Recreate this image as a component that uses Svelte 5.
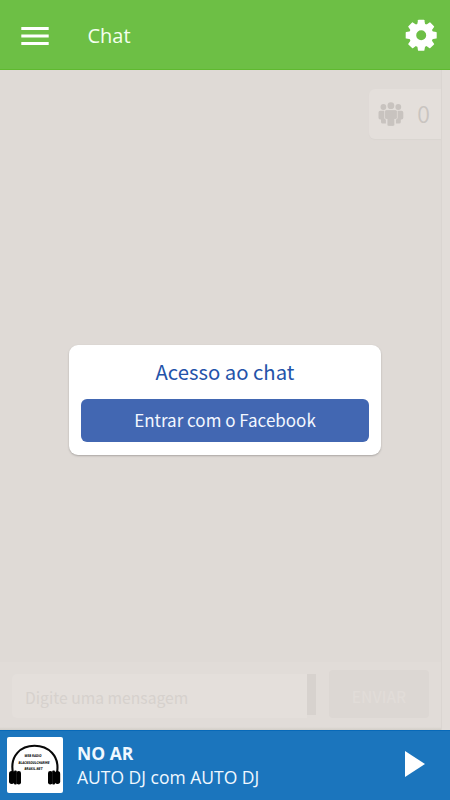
<script>
  const listeners = 0;
  const teeth = [0, 45, 90, 135, 180, 225, 270, 315];
  const logoLines = [
    { text: 'WEB RADIO', x: 26, y: 20, width: 17 },
    { text: 'BLACKSOULCHARME', x: 27, y: 27, width: 31 },
    { text: 'BRASIL.NET', x: 26.5, y: 33, width: 18 }
  ];
</script>

<div class="app">
  <header>
    <button class="menu" aria-label="Menu">
      <svg width="28" height="18" viewBox="0 0 28 18">
        <path d="M.3 0h27.400v3H.3zM.3 7.500h27.400v3H.3zM.3 15h27.400v3H.3z" fill="#fff" />
      </svg>
    </button>
    <h1>Chat</h1>
    <button class="settings" aria-label="Configurações">
      <svg width="32" height="32" viewBox="-16.200 -16.300 32 32">
        <circle r="8.500" fill="none" stroke="#fff" stroke-width="7" />
        {#each teeth as angle}
          <path d="M-4-10.500L-3.200-15q.1-.5.600-.5h5.200q.5 0 .6.500l.8 4.500z" fill="#fff" transform="rotate({angle})" />
        {/each}
      </svg>
    </button>
  </header>

  <main>
    <div class="room">
      <div class="people">
        <svg width="26" height="25" viewBox="0 0 26 25" fill="#c8c3bf">
          <circle cx="5.400" cy="5" r="2.900" />
          <circle cx="20.300" cy="5" r="2.900" />
          <path d="M2.200 8.700h4v7.500l1.700 1.600v3.800H4.600a1.600 1.600 0 0 1-1.600-1.600v-2.600H2.200A1.700 1.700 0 0 1 .5 15.700v-5.300a1.700 1.700 0 0 1 1.700-1.700z" />
          <path d="M23.600 8.700h-4v7.500l-1.700 1.600v3.800h3.300a1.600 1.600 0 0 0 1.600-1.600v-2.600h.8a1.700 1.700 0 0 0 1.700-1.700v-5.300a1.700 1.700 0 0 0-1.700-1.700z" />
          <path d="M8.400 7.900h9a1.700 1.700 0 0 1 1.700 1.700v5.800a1.700 1.700 0 0 1-1.700 1.700h-.9v5.300a1.700 1.700 0 0 1-1.700 1.700h-3.800a1.700 1.700 0 0 1-1.700-1.700v-5.300h-.9a1.700 1.700 0 0 1-1.700-1.700V9.600a1.700 1.700 0 0 1 1.700-1.700z" stroke="#e4dfdb" stroke-width=".3" />
          <circle cx="12.900" cy="3.700" r="3.400" />
        </svg>
        <span>{listeners}</span>
      </div>

      <div class="dialog">
        <h2>Acesso ao chat</h2>
        <button class="facebook"><span>Entrar com o Facebook</span></button>
      </div>

      <div class="composer">
        <div class="field"><span>Digite uma mensagem</span></div>
        <div class="scroller"></div>
        <div class="send">ENVIAR</div>
      </div>
    </div>
    <div class="gutter"></div>
  </main>

  <footer>
    <div class="cover">
      <svg width="56" height="56" viewBox="0 0 56 56">
        <rect width="56" height="56" rx="2" fill="#fff" />
        <path d="M6 36C2.500 18.500 14 8.800 27.500 8.800S53 18.500 50 36" fill="none" stroke="#080808" stroke-width="2.100" />
        <rect x="2" y="34" width="5.500" height="13" rx="2.700" />
        <rect x="7" y="33.500" width="2.800" height="14" rx="1" />
        <rect x="9.500" y="34" width="4.500" height="13.500" rx="2.200" />
        <rect x="41" y="34" width="4.500" height="13.500" rx="2.200" />
        <rect x="45.200" y="33.500" width="2.800" height="14" rx="1" />
        <rect x="47.700" y="34" width="5.500" height="13" rx="2.700" />
        {#each logoLines as line}
          <text x={line.x} y={line.y} textLength={line.width} lengthAdjust="spacingAndGlyphs">{line.text}</text>
        {/each}
      </svg>
    </div>
    <div class="track">
      <strong>NO AR</strong>
      <span>AUTO DJ com AUTO DJ</span>
    </div>
    <button class="play" aria-label="Tocar">
      <svg width="20" height="26" viewBox="0 0 20 26"><path d="M0 0l20 13L0 26z" fill="#fff" /></svg>
    </button>
  </footer>
</div>

<style>
  .app {
    display: flex;
    flex-direction: column;
    width: 450px;
    height: 800px;
    overflow: hidden;
    font-family: 'Open Sans', sans-serif;
  }
  button {
    border: 0;
    padding: 0;
    background: none;
    display: flex;
  }
  svg { display: block; }
  header {
    height: 70px;
    flex: none;
    box-sizing: border-box;
    padding: 0 13px 0 21px;
    display: flex;
    align-items: center;
    background: #6dbf45;
    border-bottom: 1px solid #5fb92f;
  }
  .menu { padding-top: 2px; }
  h1 {
    margin: 2px 0 0 38.500px;
    font-size: 20px;
    line-height: 28px;
    font-weight: 400;
    color: #f4ffef;
  }
  .settings { margin: 1px 0 0 auto; }
  main {
    height: 660px;
    flex: none;
    display: flex;
    background: #dfdad6;
    font-family: 'Noto Sans CJK SC', sans-serif;
  }
  .room {
    width: 441px;
    display: flex;
    flex-direction: column;
  }
  .gutter {
    width: 8px;
    border-left: 1px solid #dad5d1;
    background: #e2ddd9;
  }
  .people {
    align-self: flex-end;
    box-sizing: border-box;
    width: 72px;
    height: 50px;
    margin-top: 19px;
    padding: 0 11px 0 9px;
    display: flex;
    align-items: center;
    justify-content: space-between;
    border-radius: 6px 0 0 6px;
    background: #e4dfdb;
    box-shadow: 0 1px 1px #dad5d1;
    color: #c9c4c0;
    font-size: 23px;
    line-height: 30px;
  }
  .people span { padding-bottom: 3px; font-weight: 350; }
  .dialog {
    box-sizing: border-box;
    width: 312px;
    height: 110px;
    margin: 206px 0 0 69px;
    padding: 11px 12px 13px;
    border-radius: 9px;
    background: #fff;
    box-shadow: 0 1px 2px #aaa6a3;
  }
  h2 {
    margin: 0 0 12.500px;
    font-size: 20.300px;
    line-height: 30px;
    font-weight: 400;
    text-align: center;
    color: #2453a9;
  }
  .facebook {
    width: 288px;
    height: 43.500px;
    align-items: center;
    justify-content: center;
    border-radius: 6px;
    background: #4267b2;
    color: #f3f7ff;
    font: 17px/24px 'Noto Sans CJK SC', sans-serif;
  }
  .composer {
    margin-top: auto;
    height: 68px;
    box-sizing: border-box;
    padding: 8px 12px 0;
    display: flex;
    background: linear-gradient(#e1dcd8 65px, #d2cec7);
  }
  .field {
    box-sizing: border-box;
    width: 295px;
    height: 44px;
    margin-top: 4px;
    padding: 11px 0 0 13px;
    border-radius: 5px 0 0 5px;
    background: #e4dfdb;
    color: #d6d1cd;
    font-size: 15.700px;
    line-height: 25px;
  }
  .scroller {
    width: 9px;
    height: 41px;
    margin-top: 4px;
    background: #d7d2ce;
  }
  .send {
    width: 100px;
    height: 48px;
    margin-left: 13px;
    border-radius: 4px;
    background: #dcd7d3;
    color: #e1dcd8;
    font-size: 15.500px;
    font-weight: 500;
    line-height: 52px;
    text-align: center;
  }
  footer {
    height: 70px;
    flex: none;
    box-sizing: border-box;
    padding: 0 25px 1px 7px;
    display: flex;
    align-items: center;
    background: #1b75bd;
    border-top: 1px solid #0869b8;
    color: #f0f8ff;
  }
  .cover text {
    font: italic 700 3.700px 'DejaVu Sans', sans-serif;
    text-anchor: middle;
    fill: #000;
  }
  .track {
    margin-left: 14px;
    display: flex;
    flex-direction: column;
    font-size: 17.500px;
    line-height: 24px;
    white-space: nowrap;
  }
  .play { margin: 0 0 3px auto; }
</style>
